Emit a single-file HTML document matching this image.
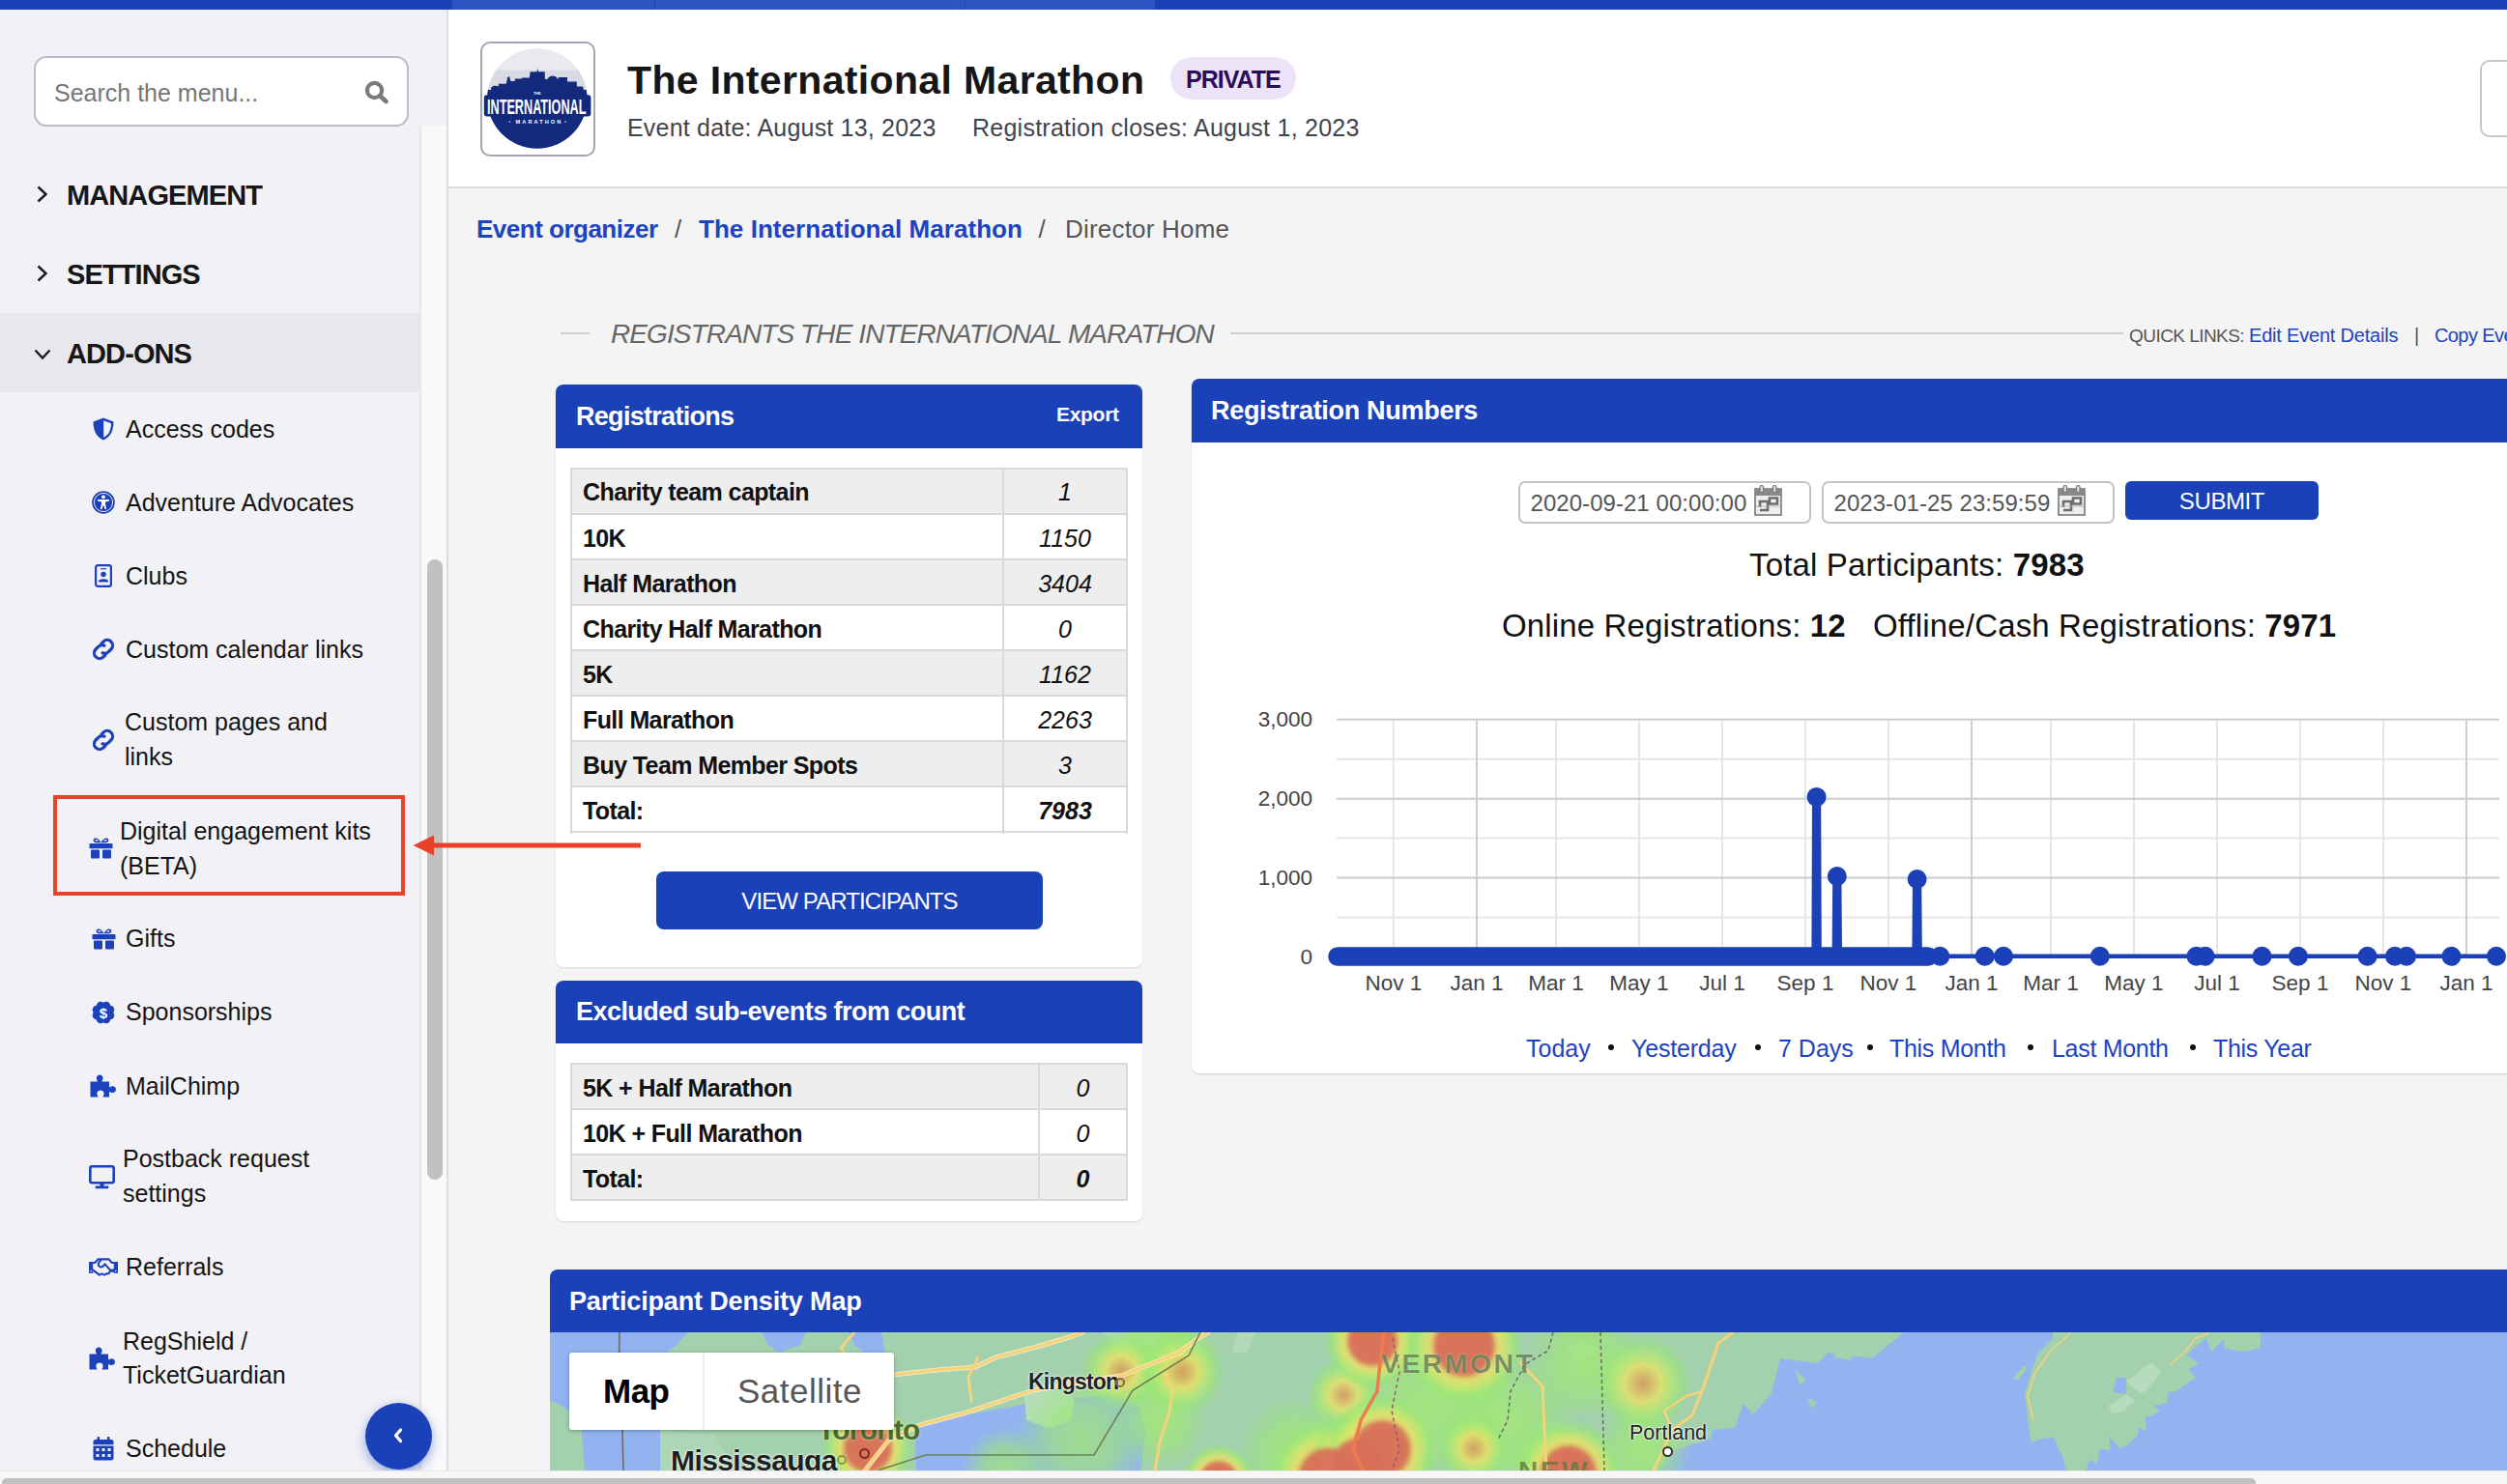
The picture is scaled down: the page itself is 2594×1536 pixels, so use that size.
<!DOCTYPE html>
<html><head><meta charset="utf-8">
<style>
*{box-sizing:border-box;margin:0;padding:0}
html,body{width:2594px;height:1536px;overflow:hidden;background:#f4f4f4;font-family:"Liberation Sans",sans-serif;color:#1a1a1a}
.a{position:absolute;white-space:nowrap}
.b{font-weight:bold}
.i{font-style:italic}
svg{position:absolute;overflow:visible}
</style></head><body>

<div class="a" style="left:0px;top:0px;width:2594px;height:10px;background:#1a41b6"></div>
<div class="a" style="left:468px;top:0px;width:727px;height:10px;background:#2c55c2"></div>
<div class="a" style="left:677px;top:0px;width:1px;height:10px;background:#1e45b3"></div>
<div class="a" style="left:998px;top:0px;width:1px;height:10px;background:#1e45b3"></div>
<div class="a" style="left:0px;top:10px;width:463px;height:1512px;background:#f2f1f6"></div>
<div class="a" style="left:462px;top:10px;width:2px;height:1512px;background:#dddce5"></div>
<div class="a" style="left:434px;top:130px;width:28px;height:1392px;background:#f9f9fa;border-left:2px solid #e7e7ea"></div>
<div class="a" style="left:442px;top:579px;width:16px;height:642px;background:#c1c1c1;border-radius:8px"></div>
<div class="a" style="left:35px;top:58px;width:388px;height:73px;background:#fff;border:2px solid #bcbbca;border-radius:13px"></div>
<div class="a " style="left:56px;top:83.8px;font-size:25px;line-height:25px;color:#767676">Search the menu...</div>
<svg style="left:377px;top:83px" width="26" height="25" viewBox="0 0 26 25"><circle cx="10.5" cy="10.5" r="7.6" fill="none" stroke="#7a7a7a" stroke-width="4.2"/><line x1="16.5" y1="16.5" x2="22.5" y2="22" stroke="#7a7a7a" stroke-width="4.6" stroke-linecap="round"/></svg>
<svg style="left:38px;top:192px" width="12" height="18" viewBox="0 0 12 18"><polyline points="1.5,1.5 9.5,9 1.5,16.5" fill="none" stroke="#1a1a1a" stroke-width="2.4"/></svg>
<div class="a b" style="left:69px;top:187.5px;font-size:29px;line-height:29px;letter-spacing:-0.9px;color:#161616">MANAGEMENT</div>
<svg style="left:38px;top:274px" width="12" height="18" viewBox="0 0 12 18"><polyline points="1.5,1.5 9.5,9 1.5,16.5" fill="none" stroke="#1a1a1a" stroke-width="2.4"/></svg>
<div class="a b" style="left:69px;top:269.5px;font-size:29px;line-height:29px;letter-spacing:-0.9px;color:#161616">SETTINGS</div>
<div class="a" style="left:0px;top:324px;width:434px;height:82px;background:#e8e7ed"></div>
<svg style="left:35px;top:361px" width="18" height="12" viewBox="0 0 18 12"><polyline points="1.5,1.5 9,9.5 16.5,1.5" fill="none" stroke="#1a1a1a" stroke-width="2.4"/></svg>
<div class="a b" style="left:69px;top:351.5px;font-size:29px;line-height:29px;letter-spacing:-0.9px;color:#161616">ADD-ONS</div>
<div class="a " style="left:130px;top:431.7px;font-size:25px;line-height:25px;color:#141414">Access codes</div>
<div class="a " style="left:130px;top:507.9px;font-size:25px;line-height:25px;color:#141414">Adventure Advocates</div>
<div class="a " style="left:130px;top:583.6px;font-size:25px;line-height:25px;color:#141414">Clubs</div>
<div class="a " style="left:130px;top:659.8px;font-size:25px;line-height:25px;color:#141414">Custom calendar links</div>
<div class="a " style="left:129px;top:735.3px;font-size:25px;line-height:25px;color:#141414">Custom pages and</div>
<div class="a " style="left:129px;top:770.8px;font-size:25px;line-height:25px;color:#141414">links</div>
<div class="a " style="left:124px;top:847.8px;font-size:25px;line-height:25px;color:#141414">Digital engagement kits</div>
<div class="a " style="left:124px;top:883.8px;font-size:25px;line-height:25px;color:#141414">(BETA)</div>
<div class="a " style="left:130px;top:958.8px;font-size:25px;line-height:25px;color:#141414">Gifts</div>
<div class="a " style="left:130px;top:1035.3px;font-size:25px;line-height:25px;color:#141414">Sponsorships</div>
<div class="a " style="left:130px;top:1111.6px;font-size:25px;line-height:25px;color:#141414">MailChimp</div>
<div class="a " style="left:127px;top:1186.8px;font-size:25px;line-height:25px;color:#141414">Postback request</div>
<div class="a " style="left:127px;top:1222.8px;font-size:25px;line-height:25px;color:#141414">settings</div>
<div class="a " style="left:130px;top:1299.3px;font-size:25px;line-height:25px;color:#141414">Referrals</div>
<div class="a " style="left:127px;top:1375.6px;font-size:25px;line-height:25px;color:#141414">RegShield /</div>
<div class="a " style="left:127px;top:1410.8px;font-size:25px;line-height:25px;color:#141414">TicketGuardian</div>
<div class="a " style="left:130px;top:1487.3px;font-size:25px;line-height:25px;color:#141414">Schedule</div>
<svg style="left:96px;top:432px" width="22" height="24" viewBox="0 0 22 24"><path d="M11 0.5 L21.5 4.5 C21.5 14 18 20.5 11 23.5 C4 20.5 0.5 14 0.5 4.5 Z" fill="#1c41bb"/><path d="M11.2 3.3 L19 6.2 C18.8 13.5 16 18.5 11.2 20.8 Z" fill="#f2f1f6"/></svg>
<svg style="left:95px;top:508px" width="24" height="24" viewBox="0 0 24 24"><circle cx="12" cy="12" r="11.8" fill="#1c41bb"/><circle cx="12" cy="12" r="9.6" fill="none" stroke="#fff" stroke-width="0.9"/><circle cx="12" cy="6.3" r="1.9" fill="#fff"/><path d="M6 9 L18 9 L18 10.6 L14 11.4 L14 13.5 L15.2 19 L13.6 19 L12 14.6 L10.4 19 L8.8 19 L10 13.5 L10 11.4 L6 10.6 Z" fill="#fff"/></svg>
<svg style="left:98px;top:584px" width="18" height="24" viewBox="0 0 18 24"><rect x="1.1" y="1.1" width="15.8" height="21.8" rx="2.2" fill="none" stroke="#1c41bb" stroke-width="2.2"/><rect x="6" y="4.2" width="6" height="1.2" fill="#1c41bb"/><circle cx="9" cy="10.5" r="2.7" fill="#1c41bb"/><path d="M4 17.6 C4 14.5 14 14.5 14 17.6 L14 18.5 L4 18.5 Z" fill="#1c41bb"/></svg>
<svg style="left:95px;top:660px" width="24" height="24" viewBox="0 0 24 24"><g transform="rotate(-45 12 12)" fill="none" stroke="#1c41bb" stroke-width="3.2" stroke-linecap="round"><path d="M9.2 17.6 H6.4 A5.6 5.6 0 0 1 6.4 6.4 H10.5 A5.6 5.6 0 0 1 15.4 10"/><path d="M14.8 6.4 H17.6 A5.6 5.6 0 0 1 17.6 17.6 H13.5 A5.6 5.6 0 0 1 8.6 14"/></g></svg>
<svg style="left:94.5px;top:754px" width="24" height="24" viewBox="0 0 24 24"><g transform="rotate(-45 12 12)" fill="none" stroke="#1c41bb" stroke-width="3.2" stroke-linecap="round"><path d="M9.2 17.6 H6.4 A5.6 5.6 0 0 1 6.4 6.4 H10.5 A5.6 5.6 0 0 1 15.4 10"/><path d="M14.8 6.4 H17.6 A5.6 5.6 0 0 1 17.6 17.6 H13.5 A5.6 5.6 0 0 1 8.6 14"/></g></svg>
<svg style="left:92px;top:867px" width="25" height="22" viewBox="0 0 25 22"><g fill="#1c41bb"><path d="M7.5 5.2 C4 5.2 3.6 0.5 7 0.5 C9 0.5 11 2.5 12.5 5 C14 2.5 16 0.5 18 0.5 C21.4 0.5 21 5.2 17.5 5.2 Z M7.5 3.6 L10 3.6 C9 2.3 8 1.9 7.2 2 C6.1 2.2 6.3 3.6 7.5 3.6 Z M15 3.6 L17.5 3.6 C18.7 3.6 18.9 2.2 17.8 2 C17 1.9 16 2.3 15 3.6 Z" fill-rule="evenodd"/><rect x="0.5" y="6" width="24" height="5.2" rx="0.8"/><rect x="2" y="12.6" width="9" height="9" rx="1"/><rect x="14" y="12.6" width="9" height="9" rx="1"/></g></svg>
<svg style="left:94.5px;top:961px" width="25" height="22" viewBox="0 0 25 22"><g fill="#1c41bb"><path d="M7.5 5.2 C4 5.2 3.6 0.5 7 0.5 C9 0.5 11 2.5 12.5 5 C14 2.5 16 0.5 18 0.5 C21.4 0.5 21 5.2 17.5 5.2 Z M7.5 3.6 L10 3.6 C9 2.3 8 1.9 7.2 2 C6.1 2.2 6.3 3.6 7.5 3.6 Z M15 3.6 L17.5 3.6 C18.7 3.6 18.9 2.2 17.8 2 C17 1.9 16 2.3 15 3.6 Z" fill-rule="evenodd"/><rect x="0.5" y="6" width="24" height="5.2" rx="0.8"/><rect x="2" y="12.6" width="9" height="9" rx="1"/><rect x="14" y="12.6" width="9" height="9" rx="1"/></g></svg>
<svg style="left:95px;top:1036px" width="24" height="24" viewBox="0 0 24 24"><g fill="#1c41bb"><circle cx="12" cy="12" r="9"/><circle cx="19.02" cy="14.91" r="4.3"/><circle cx="14.91" cy="19.02" r="4.3"/><circle cx="9.09" cy="19.02" r="4.3"/><circle cx="4.98" cy="14.91" r="4.3"/><circle cx="4.98" cy="9.09" r="4.3"/><circle cx="9.09" cy="4.98" r="4.3"/><circle cx="14.91" cy="4.98" r="4.3"/><circle cx="19.02" cy="9.09" r="4.3"/></g><text x="12" y="17.6" font-family="Liberation Sans" font-weight="bold" font-size="15" fill="#fff" text-anchor="middle">$</text></svg>
<svg style="left:93px;top:1112px" width="28" height="24" viewBox="0 0 28 24"><path d="M0.5 7.5 L8 7.5 C8 6.5 6.8 5.8 6.8 3.9 C6.8 1.8 8.4 0.5 10.2 0.5 C12 0.5 13.6 1.8 13.6 3.9 C13.6 5.8 12.4 6.5 12.4 7.5 L20 7.5 L20 13.5 C21 13.5 21.7 12.3 23.6 12.3 C25.7 12.3 27 13.9 27 15.7 C27 17.5 25.7 19.1 23.6 19.1 C21.7 19.1 21 17.9 20 17.9 L20 23.5 L13.4 23.5 C13.4 22.5 14.6 21.8 14.6 19.9 C14.6 17.8 12.8 16.6 11 16.6 C9.2 16.6 7.4 17.8 7.4 19.9 C7.4 21.8 8.6 22.5 8.6 23.5 L0.5 23.5 Z" fill="#1c41bb"/></svg>
<svg style="left:92px;top:1394px" width="28" height="24" viewBox="0 0 28 24"><path d="M0.5 7.5 L8 7.5 C8 6.5 6.8 5.8 6.8 3.9 C6.8 1.8 8.4 0.5 10.2 0.5 C12 0.5 13.6 1.8 13.6 3.9 C13.6 5.8 12.4 6.5 12.4 7.5 L20 7.5 L20 13.5 C21 13.5 21.7 12.3 23.6 12.3 C25.7 12.3 27 13.9 27 15.7 C27 17.5 25.7 19.1 23.6 19.1 C21.7 19.1 21 17.9 20 17.9 L20 23.5 L13.4 23.5 C13.4 22.5 14.6 21.8 14.6 19.9 C14.6 17.8 12.8 16.6 11 16.6 C9.2 16.6 7.4 17.8 7.4 19.9 C7.4 21.8 8.6 22.5 8.6 23.5 L0.5 23.5 Z" fill="#1c41bb"/></svg>
<svg style="left:92px;top:1206px" width="27" height="25" viewBox="0 0 27 25"><rect x="1.3" y="1.3" width="24.4" height="17" rx="2" fill="none" stroke="#1c41bb" stroke-width="2.6"/><rect x="11.5" y="18" width="4" height="4" fill="#1c41bb"/><rect x="6.5" y="21.6" width="14" height="2.6" rx="1.2" fill="#1c41bb"/></svg>
<svg style="left:88px;top:1296px" width="38" height="30" viewBox="0 0 38 30"><g fill="#1c41bb"><rect x="4" y="10" width="4.2" height="11.8"/><rect x="29.8" y="10" width="4.2" height="11.8"/></g><g fill="#f2f1f6"><circle cx="6.2" cy="19.6" r="0.8"/><circle cx="31.7" cy="19.6" r="0.8"/></g><g fill="none" stroke="#1c41bb" stroke-width="2.1" stroke-linejoin="round" stroke-linecap="round"><path d="M8.2 11 L10.2 11 L13.4 7.4 L24.6 7.4 L27.8 11 L29.8 11"/><path d="M16.2 8.6 C13.6 10.4 13 13.2 14.8 14.8 C16.4 16.2 18.6 15.2 20.6 12.4 L26 18.6 L29.8 18.6"/><path d="M8.2 18.6 L15 23.6 L17.4 22.4 L19.8 23.6 L22.2 22.4 L24.4 22.2 L26.2 19.6 L29.8 19.6"/></g></svg>
<svg style="left:96px;top:1487px" width="22" height="25" viewBox="0 0 22 25"><g fill="#1c41bb"><rect x="4.5" y="0" width="2.6" height="4.5" rx="1"/><rect x="14.9" y="0" width="2.6" height="4.5" rx="1"/><path d="M0.5 5.5 A2.5 2.5 0 0 1 3 3 L19 3 A2.5 2.5 0 0 1 21.5 5.5 L21.5 8.2 L0.5 8.2 Z"/><path d="M0.5 9.6 L21.5 9.6 L21.5 22 A2.5 2.5 0 0 1 19 24.5 L3 24.5 A2.5 2.5 0 0 1 0.5 22 Z"/></g><g fill="#f2f1f6"><rect x="3.5" y="12" width="3" height="3"/><rect x="9.5" y="12" width="3" height="3"/><rect x="15.5" y="12" width="3" height="3"/><rect x="3.5" y="18" width="3" height="3"/><rect x="9.5" y="18" width="3" height="3"/><rect x="15.5" y="18" width="3" height="3"/></g></svg>
<div class="a" style="left:378px;top:1452px;width:69px;height:69px;border-radius:50%;background:#1b41b8;box-shadow:0 4px 12px rgba(27,65,184,.45)"></div>
<svg style="left:406px;top:1477px" width="12" height="18" viewBox="0 0 12 18"><polyline points="8.6,3 3.4,8.8 8.6,14.6" fill="none" stroke="#fff" stroke-width="3.2" stroke-linejoin="round" stroke-linecap="round"/></svg>
<div class="a" style="left:464px;top:10px;width:2130px;height:184px;background:#fff"></div>
<div class="a" style="left:464px;top:193px;width:2130px;height:2px;background:#dcdbe5"></div>
<div class="a" style="left:497px;top:43px;width:119px;height:119px;border:2px solid #a6a4b3;border-radius:10px;background:#fff"></div>
<svg style="left:500px;top:46px" width="112" height="112" viewBox="0 0 112 112">
<defs><clipPath id="lc"><circle cx="55.8" cy="56" r="51.7"/></clipPath></defs>
<g clip-path="url(#lc)">
<rect x="0" y="0" width="112" height="112" fill="#e9eaf0"/>
<rect x="0" y="26.5" width="112" height="30" fill="#d8dbe6"/>
<path d="M0 112 L0 47 L8.2 47 L8.2 44.5 C10 42.5 13.5 42.5 15.8 43.4 L15.8 40.7 L23.8 40.7 L25.1 34 L27 33 L28.3 38 L32.7 38 L32.7 35.4 L39.8 35.4 L39.8 34.5 L47.8 34.5 L48.7 28.3 L55.5 28.3 L56.3 25 L57.1 28.3 L63.8 28.3 L63.8 36 L66.5 36 C68 31.5 75 31 77.2 36 L78.1 34 L87 34 L87 38.5 L96.8 38.5 L96.8 43.4 L103 43.4 L103.9 47 L112 47 L112 112 Z" fill="#13297b"/>
</g>
<rect x="0.8" y="52.3" width="110.6" height="22.2" rx="3" fill="#13297b"/>
<text x="55.8" y="51.6" font-family="Liberation Sans" font-weight="bold" font-size="3.8" fill="#fff" text-anchor="middle">THE</text>
<text x="4" y="72" font-family="Liberation Sans" font-weight="bold" font-size="22" fill="#fff" textLength="102.5" lengthAdjust="spacingAndGlyphs">INTERNATIONAL</text>
<text x="33.6" y="82" font-family="Liberation Sans" font-weight="bold" font-size="5.6" fill="#fff" textLength="46.7" lengthAdjust="spacing">MARATHON</text>
<circle cx="27.4" cy="80" r="0.9" fill="#5fc3e8"/><circle cx="85.2" cy="80" r="0.9" fill="#5fc3e8"/>
</svg>
<div class="a b" style="left:649px;top:63.4px;font-size:41px;line-height:41px;letter-spacing:0.35px;color:#161616">The International Marathon</div>
<div class="a" style="left:1211px;top:59px;width:130px;height:44px;border-radius:22px;background:#ede3f9"></div>
<div class="a b" style="left:1227px;top:69.5px;font-size:25px;line-height:25px;letter-spacing:-1px;color:#2b0b5c">PRIVATE</div>
<div class="a " style="left:649px;top:120.0px;font-size:25px;line-height:25px;letter-spacing:0.2px;color:#42444b">Event date: August 13, 2023</div>
<div class="a " style="left:1006px;top:119.8px;font-size:25px;line-height:25px;letter-spacing:0.25px;color:#42444b">Registration closes: August 1, 2023</div>
<div class="a" style="left:2566px;top:62px;width:80px;height:80px;border:2px solid #c6c6c6;border-radius:10px;background:#fff"></div>
<div class="a b" style="left:493px;top:224.2px;font-size:26px;line-height:26px;letter-spacing:-0.5px;color:#1d43c2">Event organizer</div>
<div class="a " style="left:698px;top:224.2px;font-size:26px;line-height:26px;color:#555">/</div>
<div class="a b" style="left:723px;top:224.2px;font-size:26px;line-height:26px;letter-spacing:0.05px;color:#1d43c2">The International Marathon</div>
<div class="a " style="left:1074.5px;top:224.2px;font-size:26px;line-height:26px;color:#555">/</div>
<div class="a " style="left:1102px;top:224.2px;font-size:26px;line-height:26px;letter-spacing:0.2px;color:#555">Director Home</div>
<div class="a" style="left:580px;top:343.5px;width:30px;height:2px;background:#cfcfcf"></div>
<div class="a i" style="left:632px;top:332.3px;font-size:28px;line-height:28px;letter-spacing:-0.9px;color:#666">REGISTRANTS THE INTERNATIONAL MARATHON</div>
<div class="a" style="left:1273px;top:343.5px;width:924px;height:2px;background:#cfcfcf"></div>
<div class="a " style="left:2203px;top:337.9px;font-size:19px;line-height:19px;color:#555;letter-spacing:-0.55px">QUICK LINKS:</div>
<div class="a " style="left:2327px;top:337.1px;font-size:20px;line-height:20px;color:#1d43c2;letter-spacing:-0.2px">Edit Event Details</div>
<div class="a " style="left:2498px;top:337.1px;font-size:20px;line-height:20px;color:#555">|</div>
<div class="a " style="left:2519px;top:337.1px;font-size:20px;line-height:20px;color:#1d43c2;letter-spacing:-0.6px">Copy Event</div>
<div class="a" style="left:575px;top:398px;width:607px;height:603px;background:#fff;border-radius:8px;box-shadow:0 1px 2px rgba(0,0,0,.13)"></div>
<div class="a" style="left:575px;top:398px;width:607px;height:66px;background:#1b41b8;border-radius:8px 8px 0 0"></div>
<div class="a b" style="left:596px;top:417.8px;font-size:27px;line-height:27px;letter-spacing:-0.7px;color:#fff">Registrations</div>
<div class="a b" style="left:1093px;top:417.5px;font-size:21px;line-height:21px;letter-spacing:-0.3px;color:#fff">Export</div>
<div class="a" style="left:591px;top:485px;width:575px;height:47px;background:#eeeeee"></div>
<div class="a" style="left:591px;top:532px;width:575px;height:47px;background:#ffffff"></div>
<div class="a" style="left:591px;top:579px;width:575px;height:47px;background:#eeeeee"></div>
<div class="a" style="left:591px;top:626px;width:575px;height:47px;background:#ffffff"></div>
<div class="a" style="left:591px;top:673px;width:575px;height:47px;background:#eeeeee"></div>
<div class="a" style="left:591px;top:720px;width:575px;height:47px;background:#ffffff"></div>
<div class="a" style="left:591px;top:767px;width:575px;height:47px;background:#eeeeee"></div>
<div class="a" style="left:591px;top:814px;width:575px;height:48px;background:#ffffff"></div>
<div class="a" style="left:591px;top:484px;width:575px;height:2px;background:#d9d9d9"></div>
<div class="a" style="left:591px;top:531px;width:575px;height:2px;background:#d9d9d9"></div>
<div class="a" style="left:591px;top:578px;width:575px;height:2px;background:#d9d9d9"></div>
<div class="a" style="left:591px;top:625px;width:575px;height:2px;background:#d9d9d9"></div>
<div class="a" style="left:591px;top:672px;width:575px;height:2px;background:#d9d9d9"></div>
<div class="a" style="left:591px;top:719px;width:575px;height:2px;background:#d9d9d9"></div>
<div class="a" style="left:591px;top:766px;width:575px;height:2px;background:#d9d9d9"></div>
<div class="a" style="left:591px;top:813px;width:575px;height:2px;background:#d9d9d9"></div>
<div class="a" style="left:591px;top:860px;width:575px;height:2px;background:#d9d9d9"></div>
<div class="a" style="left:590px;top:484px;width:2px;height:379px;background:#d9d9d9"></div>
<div class="a" style="left:1165px;top:484px;width:2px;height:379px;background:#d9d9d9"></div>
<div class="a" style="left:1037px;top:484px;width:2px;height:379px;background:#d9d9d9"></div>
<div class="a b" style="left:603px;top:497.4px;font-size:25px;line-height:25px;letter-spacing:-0.6px;color:#111">Charity team captain</div>
<div class="a i" style="left:1038px;top:497.4px;width:128px;text-align:center;font-size:25px;line-height:25px;color:#111;">1</div>
<div class="a b" style="left:603px;top:544.5px;font-size:25px;line-height:25px;letter-spacing:-0.6px;color:#111">10K</div>
<div class="a i" style="left:1038px;top:544.5px;width:128px;text-align:center;font-size:25px;line-height:25px;color:#111;">1150</div>
<div class="a b" style="left:603px;top:591.6px;font-size:25px;line-height:25px;letter-spacing:-0.6px;color:#111">Half Marathon</div>
<div class="a i" style="left:1038px;top:591.6px;width:128px;text-align:center;font-size:25px;line-height:25px;color:#111;">3404</div>
<div class="a b" style="left:603px;top:638.7px;font-size:25px;line-height:25px;letter-spacing:-0.6px;color:#111">Charity Half Marathon</div>
<div class="a i" style="left:1038px;top:638.7px;width:128px;text-align:center;font-size:25px;line-height:25px;color:#111;">0</div>
<div class="a b" style="left:603px;top:685.8px;font-size:25px;line-height:25px;letter-spacing:-0.6px;color:#111">5K</div>
<div class="a i" style="left:1038px;top:685.8px;width:128px;text-align:center;font-size:25px;line-height:25px;color:#111;">1162</div>
<div class="a b" style="left:603px;top:732.9px;font-size:25px;line-height:25px;letter-spacing:-0.6px;color:#111">Full Marathon</div>
<div class="a i" style="left:1038px;top:732.9px;width:128px;text-align:center;font-size:25px;line-height:25px;color:#111;">2263</div>
<div class="a b" style="left:603px;top:780.0px;font-size:25px;line-height:25px;letter-spacing:-0.6px;color:#111">Buy Team Member Spots</div>
<div class="a i" style="left:1038px;top:780.0px;width:128px;text-align:center;font-size:25px;line-height:25px;color:#111;">3</div>
<div class="a b" style="left:603px;top:827.1px;font-size:25px;line-height:25px;letter-spacing:-0.6px;color:#111">Total:</div>
<div class="a i" style="left:1038px;top:827.1px;width:128px;text-align:center;font-size:25px;line-height:25px;color:#111;font-weight:bold;">7983</div>
<div class="a" style="left:679px;top:902px;width:400px;height:60px;background:#1b41b8;border-radius:8px"></div>
<div class="a" style="left:679px;top:921.3px;width:400px;text-align:center;font-size:24px;line-height:24px;color:#fff;letter-spacing:-0.9px">VIEW PARTICIPANTS</div>
<div class="a" style="left:575px;top:1015px;width:607px;height:249px;background:#fff;border-radius:8px;box-shadow:0 1px 2px rgba(0,0,0,.13)"></div>
<div class="a" style="left:575px;top:1015px;width:607px;height:65px;background:#1b41b8;border-radius:8px 8px 0 0"></div>
<div class="a b" style="left:596px;top:1034.1px;font-size:27px;line-height:27px;letter-spacing:-0.55px;color:#fff">Excluded sub-events from count</div>
<div class="a" style="left:591px;top:1101px;width:575px;height:47px;background:#eeeeee"></div>
<div class="a" style="left:591px;top:1148px;width:575px;height:47px;background:#ffffff"></div>
<div class="a" style="left:591px;top:1195px;width:575px;height:47px;background:#eeeeee"></div>
<div class="a" style="left:591px;top:1100px;width:575px;height:2px;background:#d9d9d9"></div>
<div class="a" style="left:591px;top:1147px;width:575px;height:2px;background:#d9d9d9"></div>
<div class="a" style="left:591px;top:1194px;width:575px;height:2px;background:#d9d9d9"></div>
<div class="a" style="left:591px;top:1241px;width:575px;height:2px;background:#d9d9d9"></div>
<div class="a" style="left:590px;top:1100px;width:2px;height:143px;background:#d9d9d9"></div>
<div class="a" style="left:1165px;top:1100px;width:2px;height:143px;background:#d9d9d9"></div>
<div class="a" style="left:1074px;top:1100px;width:2px;height:143px;background:#d9d9d9"></div>
<div class="a b" style="left:603px;top:1113.7px;font-size:25px;line-height:25px;letter-spacing:-0.6px;color:#111">5K + Half Marathon</div>
<div class="a i" style="left:1075px;top:1113.7px;width:91px;text-align:center;font-size:25px;line-height:25px;color:#111;">0</div>
<div class="a b" style="left:603px;top:1160.8px;font-size:25px;line-height:25px;letter-spacing:-0.6px;color:#111">10K + Full Marathon</div>
<div class="a i" style="left:1075px;top:1160.8px;width:91px;text-align:center;font-size:25px;line-height:25px;color:#111;">0</div>
<div class="a b" style="left:603px;top:1207.9px;font-size:25px;line-height:25px;letter-spacing:-0.6px;color:#111">Total:</div>
<div class="a i" style="left:1075px;top:1207.9px;width:91px;text-align:center;font-size:25px;line-height:25px;color:#111;font-weight:bold;">0</div>
<div class="a" style="left:1233px;top:392px;width:1400px;height:719px;background:#fff;border-radius:8px;box-shadow:0 1px 2px rgba(0,0,0,.15)"></div>
<div class="a" style="left:1233px;top:392px;width:1400px;height:66px;background:#1b41b8;border-radius:8px 8px 0 0"></div>
<div class="a b" style="left:1253px;top:411.9px;font-size:27px;line-height:27px;letter-spacing:-0.3px;color:#fff">Registration Numbers</div>
<div class="a" style="left:1571px;top:498px;width:303px;height:44px;border:2px solid #c4c4c4;border-radius:7px;background:#fff"></div>
<div class="a " style="left:1583.5px;top:508.6px;font-size:24px;line-height:24px;color:#555;letter-spacing:0.05px">2020-09-21 00:00:00</div>
<svg style="left:1815px;top:502px" width="29" height="32" viewBox="0 0 29 32"><g><rect x="1" y="4" width="27" height="27" fill="#eee" stroke="#777" stroke-width="1.6"/><rect x="1" y="4" width="27" height="7" fill="#888"/><rect x="6" y="0.5" width="3.5" height="7" rx="1.5" fill="#ddd" stroke="#777" stroke-width="1.2"/><rect x="19.5" y="0.5" width="3.5" height="7" rx="1.5" fill="#ddd" stroke="#777" stroke-width="1.2"/><path d="M6 23 L6 17 L16 17 L16 13.5 L24 13.5 L24 19.5 L14 19.5 L14 26 L6 26" fill="none" stroke="#6c6c6c" stroke-width="2.6"/><line x1="2" y1="22" x2="27" y2="22" stroke="#aaa" stroke-width="0.8"/></g></svg>
<div class="a" style="left:1885px;top:498px;width:303px;height:44px;border:2px solid #c4c4c4;border-radius:7px;background:#fff"></div>
<div class="a " style="left:1897.5px;top:508.6px;font-size:24px;line-height:24px;color:#555;letter-spacing:0.05px">2023-01-25 23:59:59</div>
<svg style="left:2129px;top:502px" width="29" height="32" viewBox="0 0 29 32"><g><rect x="1" y="4" width="27" height="27" fill="#eee" stroke="#777" stroke-width="1.6"/><rect x="1" y="4" width="27" height="7" fill="#888"/><rect x="6" y="0.5" width="3.5" height="7" rx="1.5" fill="#ddd" stroke="#777" stroke-width="1.2"/><rect x="19.5" y="0.5" width="3.5" height="7" rx="1.5" fill="#ddd" stroke="#777" stroke-width="1.2"/><path d="M6 23 L6 17 L16 17 L16 13.5 L24 13.5 L24 19.5 L14 19.5 L14 26 L6 26" fill="none" stroke="#6c6c6c" stroke-width="2.6"/><line x1="2" y1="22" x2="27" y2="22" stroke="#aaa" stroke-width="0.8"/></g></svg>
<div class="a" style="left:2199px;top:498px;width:200px;height:40px;background:#1b41b8;border-radius:6px"></div>
<div class="a" style="left:2199px;top:507.4px;width:200px;text-align:center;font-size:24px;line-height:24px;color:#fff;letter-spacing:-0.4px">SUBMIT</div>
<div class="a " style="left:1810px;top:568.1px;font-size:33px;line-height:33px;color:#111;letter-spacing:0.15px">Total Participants: <b>7983</b></div>
<div class="a " style="left:1554px;top:630.5px;font-size:33px;line-height:33px;color:#111;letter-spacing:0.15px">Online Registrations: <b>12</b></div>
<div class="a " style="left:1938px;top:630.5px;font-size:33px;line-height:33px;color:#111;letter-spacing:0.15px">Offline/Cash Registrations: <b>7971</b></div>
<svg style="left:0;top:0" width="2594" height="1536" viewBox="0 0 2594 1536"><line x1="1383" y1="949.5" x2="2586" y2="949.5" stroke="#e6e6e6" stroke-width="2"/><line x1="1383" y1="867.6" x2="2586" y2="867.6" stroke="#e6e6e6" stroke-width="2"/><line x1="1383" y1="785.8" x2="2586" y2="785.8" stroke="#e6e6e6" stroke-width="2"/><line x1="1441.8" y1="744.8" x2="1441.8" y2="990.5" stroke="#e6e6e6" stroke-width="2"/><line x1="1528" y1="744.8" x2="1528" y2="990.5" stroke="#cccccc" stroke-width="2"/><line x1="1610" y1="744.8" x2="1610" y2="990.5" stroke="#e6e6e6" stroke-width="2"/><line x1="1696" y1="744.8" x2="1696" y2="990.5" stroke="#e6e6e6" stroke-width="2"/><line x1="1782" y1="744.8" x2="1782" y2="990.5" stroke="#e6e6e6" stroke-width="2"/><line x1="1868" y1="744.8" x2="1868" y2="990.5" stroke="#e6e6e6" stroke-width="2"/><line x1="1954" y1="744.8" x2="1954" y2="990.5" stroke="#e6e6e6" stroke-width="2"/><line x1="2040" y1="744.8" x2="2040" y2="990.5" stroke="#cccccc" stroke-width="2"/><line x1="2122" y1="744.8" x2="2122" y2="990.5" stroke="#e6e6e6" stroke-width="2"/><line x1="2208" y1="744.8" x2="2208" y2="990.5" stroke="#e6e6e6" stroke-width="2"/><line x1="2294" y1="744.8" x2="2294" y2="990.5" stroke="#e6e6e6" stroke-width="2"/><line x1="2380" y1="744.8" x2="2380" y2="990.5" stroke="#e6e6e6" stroke-width="2"/><line x1="2466" y1="744.8" x2="2466" y2="990.5" stroke="#e6e6e6" stroke-width="2"/><line x1="2552" y1="744.8" x2="2552" y2="990.5" stroke="#cccccc" stroke-width="2"/><line x1="1383" y1="908.6" x2="2586" y2="908.6" stroke="#cccccc" stroke-width="2"/><line x1="1383" y1="826.7" x2="2586" y2="826.7" stroke="#cccccc" stroke-width="2"/><line x1="1383" y1="744.8" x2="2586" y2="744.8" stroke="#cccccc" stroke-width="2"/><line x1="1990" y1="989.8" x2="2590" y2="989.8" stroke="#1c40b7" stroke-width="4.6"/><line x1="1384" y1="990" x2="1995" y2="990" stroke="#1c40b7" stroke-width="19.5" stroke-linecap="round"/><polygon points="1875.0,824.9 1884.1999999999998,824.9 1884.8,985 1874.3999999999999,985" fill="#1c40b7"/><circle cx="1879.6" cy="824.9" r="10" fill="#1c40b7"/><polygon points="1896.2,907 1905.3999999999999,907 1906.0,985 1895.6,985" fill="#1c40b7"/><circle cx="1900.8" cy="907" r="10" fill="#1c40b7"/><polygon points="1979.0,910 1988.1999999999998,910 1988.8,985 1978.3999999999999,985" fill="#1c40b7"/><circle cx="1983.6" cy="910" r="10" fill="#1c40b7"/><circle cx="2007.3" cy="989.8" r="10" fill="#1c40b7"/><circle cx="2053.7" cy="989.8" r="10" fill="#1c40b7"/><circle cx="2073" cy="989.8" r="10" fill="#1c40b7"/><circle cx="2172.8" cy="989.8" r="10" fill="#1c40b7"/><circle cx="2272.5" cy="989.8" r="10" fill="#1c40b7"/><circle cx="2281.6" cy="989.8" r="10" fill="#1c40b7"/><circle cx="2340.5" cy="989.8" r="10" fill="#1c40b7"/><circle cx="2377.9" cy="989.8" r="10" fill="#1c40b7"/><circle cx="2449.6" cy="989.8" r="10" fill="#1c40b7"/><circle cx="2478" cy="989.8" r="10" fill="#1c40b7"/><circle cx="2490" cy="989.8" r="10" fill="#1c40b7"/><circle cx="2536.5" cy="989.8" r="10" fill="#1c40b7"/><circle cx="2583" cy="989.8" r="10" fill="#1c40b7"/></svg>
<div class="a" style="left:1200px;top:733.8px;width:1358px;text-align:right;font-size:22.5px;line-height:22.5px;color:#444"></div>
<div class="a" style="left:1200px;top:815.8px;width:1358px;text-align:right;font-size:22.5px;line-height:22.5px;color:#444"></div>
<div class="a" style="left:1200px;top:897.8px;width:1358px;text-align:right;font-size:22.5px;line-height:22.5px;color:#444"></div>
<div class="a" style="left:1200px;top:979.9px;width:1358px;text-align:right;font-size:22.5px;line-height:22.5px;color:#444"></div>
<div class="a" style="left:1158px;top:733.8px;width:200px;text-align:right;font-size:22.5px;line-height:22.5px;color:#444">3,000</div>
<div class="a" style="left:1158px;top:815.8px;width:200px;text-align:right;font-size:22.5px;line-height:22.5px;color:#444">2,000</div>
<div class="a" style="left:1158px;top:897.8px;width:200px;text-align:right;font-size:22.5px;line-height:22.5px;color:#444">1,000</div>
<div class="a" style="left:1158px;top:979.9px;width:200px;text-align:right;font-size:22.5px;line-height:22.5px;color:#444">0</div>
<div class="a" style="left:1381.8px;top:1006.9px;width:120px;text-align:center;font-size:22.5px;line-height:22.5px;color:#444">Nov 1</div>
<div class="a" style="left:1468.0px;top:1006.9px;width:120px;text-align:center;font-size:22.5px;line-height:22.5px;color:#444">Jan 1</div>
<div class="a" style="left:1550.0px;top:1006.9px;width:120px;text-align:center;font-size:22.5px;line-height:22.5px;color:#444">Mar 1</div>
<div class="a" style="left:1636.0px;top:1006.9px;width:120px;text-align:center;font-size:22.5px;line-height:22.5px;color:#444">May 1</div>
<div class="a" style="left:1722.0px;top:1006.9px;width:120px;text-align:center;font-size:22.5px;line-height:22.5px;color:#444">Jul 1</div>
<div class="a" style="left:1808.0px;top:1006.9px;width:120px;text-align:center;font-size:22.5px;line-height:22.5px;color:#444">Sep 1</div>
<div class="a" style="left:1894.0px;top:1006.9px;width:120px;text-align:center;font-size:22.5px;line-height:22.5px;color:#444">Nov 1</div>
<div class="a" style="left:1980.0px;top:1006.9px;width:120px;text-align:center;font-size:22.5px;line-height:22.5px;color:#444">Jan 1</div>
<div class="a" style="left:2062.0px;top:1006.9px;width:120px;text-align:center;font-size:22.5px;line-height:22.5px;color:#444">Mar 1</div>
<div class="a" style="left:2148.0px;top:1006.9px;width:120px;text-align:center;font-size:22.5px;line-height:22.5px;color:#444">May 1</div>
<div class="a" style="left:2234.0px;top:1006.9px;width:120px;text-align:center;font-size:22.5px;line-height:22.5px;color:#444">Jul 1</div>
<div class="a" style="left:2320.0px;top:1006.9px;width:120px;text-align:center;font-size:22.5px;line-height:22.5px;color:#444">Sep 1</div>
<div class="a" style="left:2406.0px;top:1006.9px;width:120px;text-align:center;font-size:22.5px;line-height:22.5px;color:#444">Nov 1</div>
<div class="a" style="left:2492.0px;top:1006.9px;width:120px;text-align:center;font-size:22.5px;line-height:22.5px;color:#444">Jan 1</div>
<div class="a " style="left:1579px;top:1073.1px;font-size:25px;line-height:25px;color:#1d43c2;letter-spacing:0px">Today</div>
<div class="a " style="left:1688px;top:1073.1px;font-size:25px;line-height:25px;color:#1d43c2;letter-spacing:-0.2px">Yesterday</div>
<div class="a " style="left:1840px;top:1073.1px;font-size:25px;line-height:25px;color:#1d43c2;letter-spacing:0px">7 Days</div>
<div class="a " style="left:1955px;top:1073.1px;font-size:25px;line-height:25px;color:#1d43c2;letter-spacing:-0.3px">This Month</div>
<div class="a " style="left:2123px;top:1073.1px;font-size:25px;line-height:25px;color:#1d43c2;letter-spacing:-0.3px">Last Month</div>
<div class="a " style="left:2290px;top:1073.1px;font-size:25px;line-height:25px;color:#1d43c2;letter-spacing:-0.3px">This Year</div>
<div class="a" style="left:1664.0px;top:1081px;width:6px;height:6px;border-radius:50%;background:#111"></div>
<div class="a" style="left:1816.0px;top:1081px;width:6px;height:6px;border-radius:50%;background:#111"></div>
<div class="a" style="left:1931.6px;top:1081px;width:6px;height:6px;border-radius:50%;background:#111"></div>
<div class="a" style="left:2098.0px;top:1081px;width:6px;height:6px;border-radius:50%;background:#111"></div>
<div class="a" style="left:2266.4px;top:1081px;width:6px;height:6px;border-radius:50%;background:#111"></div>
<div class="a" style="left:569px;top:1314px;width:2100px;height:66px;background:#1b41b8;border-radius:8px 8px 0 0"></div>
<div class="a b" style="left:589px;top:1333.5px;font-size:27px;line-height:27px;letter-spacing:-0.15px;color:#fff">Participant Density Map</div>
<div class="a" style="left:569px;top:1379px;width:2030px;height:143px;overflow:hidden"><div class="a" style="left:-569px;top:-1379px;width:2594px;height:1536px"><svg style="left:0;top:0" width="2594" height="1536" viewBox="0 0 2594 1536"><defs><clipPath id="mc"><rect x="569" y="1379" width="2030" height="143"/></clipPath><radialGradient id="hr"><stop offset="0" stop-color="#e2c466" stop-opacity=".9"/><stop offset=".5" stop-color="#e2c466" stop-opacity=".9"/><stop offset=".6" stop-color="#e6df6a" stop-opacity=".86"/><stop offset=".72" stop-color="#c6e86c" stop-opacity=".8"/><stop offset=".86" stop-color="#9be872" stop-opacity=".55"/><stop offset="1" stop-color="#98e872" stop-opacity="0"/></radialGradient><filter id="cb" x="-20%" y="-20%" width="140%" height="140%"><feGaussianBlur stdDeviation="2"/></filter><radialGradient id="h0"><stop offset="0" stop-color="#a6ea70" stop-opacity="0.75"/><stop offset="0.5" stop-color="#9ee872" stop-opacity="0.6"/><stop offset="1" stop-color="#98e872" stop-opacity="0"/></radialGradient><radialGradient id="h1"><stop offset="0" stop-color="#a6ea70" stop-opacity="0.75"/><stop offset="0.5" stop-color="#9ee872" stop-opacity="0.6"/><stop offset="1" stop-color="#98e872" stop-opacity="0"/></radialGradient><radialGradient id="h2"><stop offset="0" stop-color="#a6ea70" stop-opacity="0.75"/><stop offset="0.5" stop-color="#9ee872" stop-opacity="0.6"/><stop offset="1" stop-color="#98e872" stop-opacity="0"/></radialGradient><radialGradient id="h3"><stop offset="0" stop-color="#a6ea70" stop-opacity="0.75"/><stop offset="0.5" stop-color="#9ee872" stop-opacity="0.6"/><stop offset="1" stop-color="#98e872" stop-opacity="0"/></radialGradient><radialGradient id="h4"><stop offset="0" stop-color="#a6ea70" stop-opacity="0.75"/><stop offset="0.5" stop-color="#9ee872" stop-opacity="0.6"/><stop offset="1" stop-color="#98e872" stop-opacity="0"/></radialGradient><radialGradient id="h5"><stop offset="0" stop-color="#a6ea70" stop-opacity="0.75"/><stop offset="0.5" stop-color="#9ee872" stop-opacity="0.6"/><stop offset="1" stop-color="#98e872" stop-opacity="0"/></radialGradient><radialGradient id="h6"><stop offset="0" stop-color="#a6ea70" stop-opacity="0.75"/><stop offset="0.5" stop-color="#9ee872" stop-opacity="0.6"/><stop offset="1" stop-color="#98e872" stop-opacity="0"/></radialGradient><radialGradient id="h7"><stop offset="0" stop-color="#a6ea70" stop-opacity="0.75"/><stop offset="0.5" stop-color="#9ee872" stop-opacity="0.6"/><stop offset="1" stop-color="#98e872" stop-opacity="0"/></radialGradient><radialGradient id="h8"><stop offset="0" stop-color="#a6ea70" stop-opacity="0.75"/><stop offset="0.5" stop-color="#9ee872" stop-opacity="0.6"/><stop offset="1" stop-color="#98e872" stop-opacity="0"/></radialGradient><radialGradient id="h9"><stop offset="0" stop-color="#a6ea70" stop-opacity="0.75"/><stop offset="0.5" stop-color="#9ee872" stop-opacity="0.6"/><stop offset="1" stop-color="#98e872" stop-opacity="0"/></radialGradient><radialGradient id="h11"><stop offset="0" stop-color="#d69a5c" stop-opacity="0.9"/><stop offset="0.18" stop-color="#dcb864" stop-opacity="0.88"/><stop offset="0.38" stop-color="#e6e06a" stop-opacity="0.85"/><stop offset="0.6" stop-color="#b8ea6e" stop-opacity="0.72"/><stop offset="0.82" stop-color="#98e872" stop-opacity="0.45"/><stop offset="1" stop-color="#98e872" stop-opacity="0"/></radialGradient><radialGradient id="h12"><stop offset="0" stop-color="#d69a5c" stop-opacity="0.9"/><stop offset="0.18" stop-color="#dcb864" stop-opacity="0.88"/><stop offset="0.38" stop-color="#e6e06a" stop-opacity="0.85"/><stop offset="0.6" stop-color="#b8ea6e" stop-opacity="0.72"/><stop offset="0.82" stop-color="#98e872" stop-opacity="0.45"/><stop offset="1" stop-color="#98e872" stop-opacity="0"/></radialGradient><radialGradient id="h13"><stop offset="0" stop-color="#d69a5c" stop-opacity="0.9"/><stop offset="0.18" stop-color="#dcb864" stop-opacity="0.88"/><stop offset="0.38" stop-color="#e6e06a" stop-opacity="0.85"/><stop offset="0.6" stop-color="#b8ea6e" stop-opacity="0.72"/><stop offset="0.82" stop-color="#98e872" stop-opacity="0.45"/><stop offset="1" stop-color="#98e872" stop-opacity="0"/></radialGradient><radialGradient id="h14"><stop offset="0" stop-color="#d69a5c" stop-opacity="0.9"/><stop offset="0.18" stop-color="#dcb864" stop-opacity="0.88"/><stop offset="0.38" stop-color="#e6e06a" stop-opacity="0.85"/><stop offset="0.6" stop-color="#b8ea6e" stop-opacity="0.72"/><stop offset="0.82" stop-color="#98e872" stop-opacity="0.45"/><stop offset="1" stop-color="#98e872" stop-opacity="0"/></radialGradient><radialGradient id="h15"><stop offset="0" stop-color="#d69a5c" stop-opacity="0.9"/><stop offset="0.18" stop-color="#dcb864" stop-opacity="0.88"/><stop offset="0.38" stop-color="#e6e06a" stop-opacity="0.85"/><stop offset="0.6" stop-color="#b8ea6e" stop-opacity="0.72"/><stop offset="0.82" stop-color="#98e872" stop-opacity="0.45"/><stop offset="1" stop-color="#98e872" stop-opacity="0"/></radialGradient></defs><g clip-path="url(#mc)"><rect x="569" y="1379" width="2030" height="143" fill="#a3d0ad"/><path d="M569 1379 L712 1379 L700 1392 L688 1402 L683 1420 L683 1522 L605 1522 L601 1470 L578 1453 L569 1450 Z" fill="#93b3f0"/><path d="M788 1379 L834 1379 L828 1392 L806 1400 L795 1392 Z" fill="#93b3f0"/><path d="M878 1379 L912 1379 L916 1400 L896 1402 L884 1392 Z" fill="#93b3f0"/><path d="M683 1480 L740 1485 L760 1522 L683 1522 Z" fill="#b6dcbd" opacity="0.5"/><path d="M948 1522 L946 1474 L1008 1463 L1069 1452 L1110 1447 L1150 1444 L1178 1455 L1186 1483 L1180 1522 Z" fill="#93b3f0"/><path d="M1060 1442 L1090 1436 L1112 1448 L1108 1470 L1085 1478 L1062 1470 Z" fill="#b6dcbd"/><rect x="1700" y="1379" width="900" height="143" fill="#93b3f0"/><path d="M1600 1379 L1970 1379 L1937 1406 L1892 1400 L1880 1411 L1842 1406 L1833 1442 L1814 1464 L1804 1453 L1795 1478 L1772 1480 L1770 1489 L1730 1502 L1715 1522 L1600 1522 Z" fill="#a3d0ad"/><path d="M1858 1418 L1868 1428 L1862 1434 Z M1870 1446 L1880 1452 L1874 1458 Z M1900 1390 L1925 1392 L1915 1408 L1898 1405 Z" fill="#a3d0ad"/><polygon points="2124,1379 2339,1379 2339,1395 2322,1399 2313.5,1398 2300.7,1395 2301.7,1385.4 2294,1392.8 2288,1399 2282.6,1385 2262.3,1402.4 2275,1411 2264.5,1417 2272,1426 2249.6,1440.8 2243,1440.8 2243,1451.4 2228,1455.7 2234.6,1460 2228,1465.3 2219.7,1466.3 2220.8,1481 2212.3,1477 2212.3,1485.5 2200.6,1496 2193,1499.3 2182.5,1486.6 2183.5,1501.5 2172.9,1499.3 2169.7,1515.3 2162.2,1511 2158,1522 2137.7,1522 2133.5,1504.7 2129.2,1498.3 2125,1487.6 2114.3,1488.7 2101.5,1493 2098.3,1470.6 2095,1443 2102.6,1417.3 2109,1400.3 2124,1385.4" fill="#a3d0ad"/><path d="M2083 1427 L2094 1413 L2098 1416 L2088 1428 Z" fill="#a3d0ad"/><path d="M2190 1426 L2200 1426 L2200 1443 L2186 1441 Z" fill="#93b3f0"/><path d="M2200 1430 L2226 1410 L2236 1420 L2220 1440 L2215 1442 Z M2182 1455 L2200 1443 L2210 1450 L2195 1462 L2185 1462 Z" fill="#b6dcbd"/><path d="M1140 1379 L1200 1379 L1195 1392 L1160 1395 Z M1280 1379 L1300 1379 L1290 1400 L1275 1400 Z M1620 1395 L1640 1388 L1650 1400 L1632 1410 Z" fill="#b6dcbd" opacity="0.7"/><circle cx="1120" cy="1490" r="70" fill="url(#h0)"/><circle cx="1200" cy="1400" r="55" fill="url(#h1)"/><circle cx="1480" cy="1455" r="80" fill="url(#h2)"/><circle cx="1340" cy="1505" r="60" fill="url(#h3)"/><circle cx="1560" cy="1470" r="70" fill="url(#h4)"/><circle cx="1640" cy="1410" r="60" fill="url(#h5)"/><circle cx="1040" cy="1522" r="45" fill="url(#h6)"/><circle cx="1200" cy="1470" r="50" fill="url(#h7)"/><circle cx="1700" cy="1500" r="50" fill="url(#h8)"/><circle cx="1600" cy="1520" r="50" fill="url(#h9)"/><circle cx="898" cy="1499" r="48" fill="url(#hr)"/><circle cx="1160" cy="1419" r="42" fill="url(#h11)"/><circle cx="1223" cy="1420" r="45" fill="url(#h12)"/><circle cx="1390" cy="1444" r="38" fill="url(#h13)"/><circle cx="1700" cy="1432" r="50" fill="url(#h14)"/><circle cx="1525" cy="1499" r="38" fill="url(#h15)"/><circle cx="1261" cy="1532" r="38" fill="url(#hr)"/><circle cx="1420" cy="1388" r="50" fill="url(#hr)"/><circle cx="1515" cy="1393" r="62" fill="url(#hr)"/><circle cx="1375" cy="1530" r="62" fill="url(#hr)"/><circle cx="1405" cy="1515" r="52" fill="url(#hr)"/><circle cx="1430" cy="1500" r="58" fill="url(#hr)"/><circle cx="1623" cy="1525" r="56" fill="url(#hr)"/><g filter="url(#cb)"><circle cx="898" cy="1499" r="24.0" fill="#d8705a" fill-opacity=".95"/><circle cx="1261" cy="1532" r="19.0" fill="#d8705a" fill-opacity=".95"/><circle cx="1420" cy="1388" r="25.0" fill="#d8705a" fill-opacity=".95"/><circle cx="1515" cy="1393" r="31.0" fill="#d8705a" fill-opacity=".95"/><circle cx="1375" cy="1530" r="31.0" fill="#d8705a" fill-opacity=".95"/><circle cx="1405" cy="1515" r="26.0" fill="#d8705a" fill-opacity=".95"/><circle cx="1430" cy="1500" r="29.0" fill="#d8705a" fill-opacity=".95"/><circle cx="1623" cy="1525" r="28.0" fill="#d8705a" fill-opacity=".95"/></g><g fill="none" stroke-linejoin="round" stroke-linecap="round"><g stroke="#fff3c8" stroke-width="5" opacity=".8"><path d="M895 1522 L920 1490 L952 1475 L1000 1462 L1069 1439 L1120 1430 L1160 1424 L1220 1400 L1240 1385 L1250 1379"/><path d="M924 1423 L969 1418 L1009 1415 L1030 1405 L1069 1395 L1110 1383 L1120 1379"/></g><g stroke="#f6d27a" stroke-width="3"><path d="M895 1522 L920 1490 L952 1475 L1000 1462 L1069 1439 L1120 1430 L1160 1424 L1220 1400 L1240 1385 L1250 1379"/><path d="M924 1423 L969 1418 L1009 1415 L1030 1405 L1069 1395 L1110 1383 L1120 1379"/><path d="M1005 1450 L1002 1425 L1012 1405"/><path d="M884 1379 L870 1395 L880 1410"/><path d="M1205 1420 L1213 1440 L1210 1462 L1200 1492 L1195 1522"/><path d="M1573 1410 L1596 1435 L1598 1480 L1600 1522"/><path d="M1793 1379 L1778 1390 L1768 1420 L1761 1440 L1751 1465 L1730 1480 L1711 1522"/><path d="M1730 1480 L1722 1460 L1745 1445 L1761 1440" stroke-width="2.5"/></g><path d="M1432 1379 L1428 1410 L1425 1440 L1408 1470 L1400 1500 L1410 1522" stroke="#ee7a50" stroke-width="3.5"/><path d="M2142 1380 L2122 1398 L2106 1420 L2098 1445 L2104 1470" stroke="#f6d27a" stroke-width="1.6"/><path d="M2246 1412 L2262 1398 L2272 1385 L2285 1380" stroke="#f6d27a" stroke-width="1.6"/></g><g fill="none" stroke="#6a6a6a" stroke-width="1.6"><path d="M641 1379 L640 1440 L644 1480 L645 1522"/><path d="M908 1522 L958 1506 L1132 1506 L1172 1439 L1230 1403 L1242 1379" stroke="#6f7f5a"/></g><g fill="none" stroke="#6a6a6a" stroke-width="1.5" stroke-dasharray="4 3"><path d="M1607 1379 L1602 1398 L1578 1412 L1563 1440 L1560 1470 L1550 1490"/><path d="M1656 1379 L1658 1450 L1660 1522"/><path d="M1441 1385 L1448 1420 L1440 1460 L1448 1500 L1440 1522" stroke="#9a5a6a"/></g></g></svg><div class="a" style="left:1429px;top:1397.3px;font-size:28.5px;line-height:28.5px;letter-spacing:2.4px;font-weight:bold;color:rgba(95,120,70,.78);text-shadow:0 0 2px rgba(255,255,255,.5)">VERMONT</div><div class="a" style="left:1571px;top:1509px;font-size:28px;line-height:28px;letter-spacing:3px;font-weight:bold;color:rgba(95,120,70,.78)">NEW</div><div class="a" style="left:1064px;top:1419px;font-size:23px;line-height:23px;letter-spacing:-0.8px;font-weight:bold;color:#222;text-shadow:0 0 2px #fff,0 0 3px #fff">Kingston</div><div class="a" style="left:1154px;top:1426px;width:10px;height:10px;border:2px solid #8a6a3a;border-radius:50%"></div><div class="a" style="left:1686px;top:1473.2px;font-size:21.5px;line-height:21.5px;color:#222;text-shadow:0 0 2px #fff,0 0 3px #fff">Portland</div><div class="a" style="left:1720px;top:1497px;width:11px;height:11px;border:2.5px solid #333;border-radius:50%;background:#fff"></div><div class="a" style="left:846px;top:1465.3px;font-size:30px;line-height:30px;letter-spacing:-0.8px;font-weight:bold;color:#4f6a30;text-shadow:0 0 3px rgba(230,255,200,.8)">Toronto</div><div class="a" style="left:694px;top:1496.8px;font-size:30px;line-height:30px;letter-spacing:-0.6px;font-weight:bold;color:#1e1e1e;text-shadow:0 0 3px #fff,0 0 2px #fff">Mississauga</div><div class="a" style="left:889px;top:1499px;width:11px;height:11px;border:2.5px solid #7a2a20;border-radius:50%"></div><div class="a" style="left:866px;top:1506px;width:10px;height:10px;border:2px solid #8a9a40;border-radius:50%"></div></div></div>
<div class="a" style="left:589px;top:1400px;width:336px;height:80px;background:#fff;border-radius:3px;box-shadow:0 1px 4px rgba(0,0,0,.3)"></div>
<div class="a" style="left:727px;top:1400px;width:2px;height:80px;background:#ececec"></div>
<div class="a b" style="left:624px;top:1422.2px;font-size:35px;line-height:35px;color:#000;letter-spacing:-0.5px">Map</div>
<div class="a " style="left:763px;top:1422.2px;font-size:35px;line-height:35px;color:#565656;letter-spacing:0.5px">Satellite</div>
<div class="a" style="left:55px;top:823px;width:364px;height:104px;border:4px solid #e5432c"></div>
<svg style="left:426px;top:862px" width="240" height="26" viewBox="0 0 240 26"><polygon points="1.5,13 23,2.5 23,23.5" fill="#e8412a"/><rect x="20" y="10.5" width="217" height="5" fill="#e8412a"/></svg>
<div class="a" style="left:0px;top:1522px;width:2594px;height:14px;background:#f7f7f7;border-top:1px solid #e9e9e9"></div>
<div class="a" style="left:2px;top:1530px;width:2332px;height:6px;background:#c1c1c1;border-radius:5px 5px 0 0"></div>
</body></html>
